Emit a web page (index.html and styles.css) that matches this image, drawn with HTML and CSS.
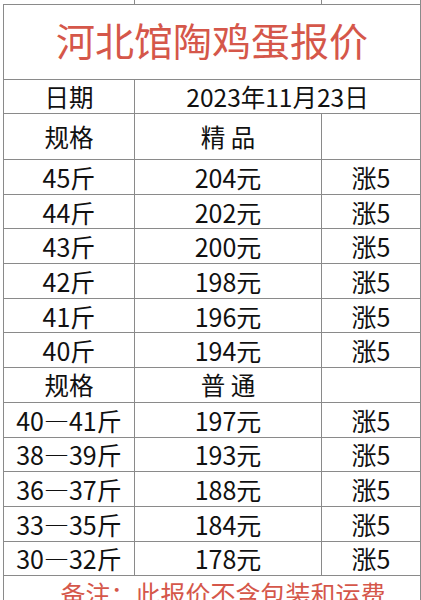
FILE: index.html
```html
<!DOCTYPE html>
<html lang="zh">
<head>
<meta charset="utf-8">
<title>河北馆陶鸡蛋报价</title>
<link rel="stylesheet" href="styles.css">
</head>
<body>
<table class="sheet">
  <colgroup>
    <col class="c1">
    <col class="c2">
    <col class="c3">
  </colgroup>
  <tr class="r-top"><td class="no-left"></td><td></td><td></td></tr>
  <tr class="r-title"><td colspan="3" class="title">河北馆陶鸡蛋报价</td></tr>
  <tr class="r-date"><td class="label">日期</td><td colspan="2" class="label">2023年11月23日</td></tr>
  <tr class="r-head"><td class="label">规格</td><td class="label">精 品</td><td></td></tr>
  <tr class="r-data"><td>45斤</td><td>204元</td><td>涨5</td></tr>
  <tr class="r-data"><td>44斤</td><td>202元</td><td>涨5</td></tr>
  <tr class="r-data"><td>43斤</td><td>200元</td><td>涨5</td></tr>
  <tr class="r-data"><td>42斤</td><td>198元</td><td>涨5</td></tr>
  <tr class="r-data"><td>41斤</td><td>196元</td><td>涨5</td></tr>
  <tr class="r-data"><td>40斤</td><td>194元</td><td>涨5</td></tr>
  <tr class="r-data"><td class="label">规格</td><td class="label">普 通</td><td></td></tr>
  <tr class="r-data"><td>40—41斤</td><td>197元</td><td>涨5</td></tr>
  <tr class="r-data"><td>38—39斤</td><td>193元</td><td>涨5</td></tr>
  <tr class="r-data"><td>36—37斤</td><td>188元</td><td>涨5</td></tr>
  <tr class="r-data"><td>33—35斤</td><td>184元</td><td>涨5</td></tr>
  <tr class="r-data"><td>30—32斤</td><td>178元</td><td>涨5</td></tr>
  <tr class="r-note"><td colspan="3" class="note">备注：此报价不含包装和运费</td></tr>
</table>
</body>
</html>
```
FILE: styles.css
```css
html, body {
  margin: 0;
  padding: 0;
  background: #ffffff;
}
body {
  font-family: "Noto Sans CJK SC", "Noto Sans", sans-serif;
  color: #111111;
  overflow: hidden;
}
.sheet {
  margin: -1px 0 0 3px;
  width: 417px;
  border-collapse: collapse;
  table-layout: fixed;
}
.c1 { width: 131px; }
.c2 { width: 187px; }
.c3 { width: 99px; }
.sheet td {
  border: 1px solid #8a8a8a;
  padding: 0;
  text-align: center;
  vertical-align: middle;
  font-size: 25px;
  line-height: 30px;
  white-space: nowrap;
  overflow: hidden;
}
.sheet .no-left {
  border-left-color: transparent;
}
.r-top td { height: 5px; line-height: 5px; border-top: none; }
.r-title td { height: 68px; }
.r-date td { height: 33px; }
.r-head td { height: 45px; }
.r-data td { height: 33.7px; }
.r-note td { height: 40px; }
.sheet .label { font-size: 24.5px; }
.sheet .title {
  font-size: 39px;
  line-height: 46px;
  color: #d5574a;
  padding-bottom: 6px;
}
.sheet .note {
  color: #d5574a;
  font-size: 25px;
  line-height: 30px;
  vertical-align: top;
  padding-top: 2px;
  padding-left: 22px;
}
```
